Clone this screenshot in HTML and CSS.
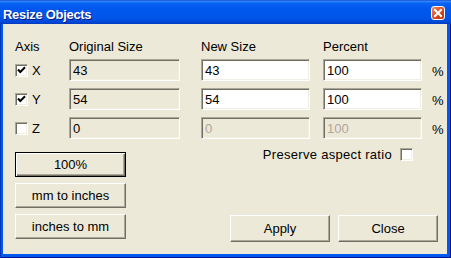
FILE: index.html
```html
<!DOCTYPE html>
<html lang="en">
<head>
  <meta charset="UTF-8" />
  <title>Resize Objects</title>
  <link rel="stylesheet" href="styles.css">
</head>
<body>

  <div class="window">
    <div class="titlebar">
      <span class="title">Resize Objects</span>
      <span class="close-btn">
        <svg width="12" height="12" viewBox="0 0 12 12"><path d="M3 3 L9 9 M9 3 L3 9" stroke="#fff" stroke-width="2" stroke-linecap="square" /></svg>
      </span>
    </div>

    <div class="client">
      <div class="axis-grid">
        <div class="head">Axis</div>
        <div class="head">Original Size</div>
        <div class="head">New Size</div>
        <div class="head">Percent</div>
        <div></div>

        <label class="axis"><span class="check"><svg width="9" height="9" viewBox="0 0 9 9"><path d="M1 3.5 L3.3 6 L8 1.3" stroke="#000" stroke-width="2" fill="none" /></svg></span>X</label>
        <div class="field readonly">43</div>
        <div class="field">43</div>
        <div class="field">100</div>
        <div class="unit">%</div>

        <label class="axis"><span class="check"><svg width="9" height="9" viewBox="0 0 9 9"><path d="M1 3.5 L3.3 6 L8 1.3" stroke="#000" stroke-width="2" fill="none" /></svg></span>Y</label>
        <div class="field readonly">54</div>
        <div class="field">54</div>
        <div class="field">100</div>
        <div class="unit">%</div>

        <label class="axis"><span class="check"></span>Z</label>
        <div class="field readonly">0</div>
        <div class="field disabled">0</div>
        <div class="field disabled">100</div>
        <div class="unit">%</div>
      </div>

      <div class="bottom">
        <div class="left-btns">
          <button class="btn default">100%</button>
          <button class="btn">mm to inches</button>
          <button class="btn">inches to mm</button>
        </div>
        <div class="right-col">
          <label class="preserve">Preserve aspect ratio <span class="check"></span></label>
          <div class="actions">
            <button class="btn wide">Apply</button>
            <button class="btn wide">Close</button>
          </div>
        </div>
      </div>
    </div>
  </div>

</body>
</html>
```

FILE: styles.css
```css
body {
  margin: 0;
  font-family: "Liberation Sans", Arial, sans-serif;
  font-size: 13px;
  line-height: 15px;
  color: #000;
  background: #0054e3;
}

.window {
  width: 451px;
  height: 258px;
  display: flex;
  flex-direction: column;
  background: #0058ee;
  box-shadow: inset 1px 0 #0036b8, inset -1px -1px #00138c;
}

.titlebar {
  height: 24px;
  flex: none;
  display: flex;
  justify-content: space-between;
  background: linear-gradient(to bottom, #0037b8 0, #3d8cff 1px, #0a64f4 3px, #0058ee 8px, #0055e8 18px, #0048d8 22px, #0038c0 24px);
}

.title {
  margin: 7px 0 0 3px;
  color: #fff;
  font-weight: bold;
  letter-spacing: -0.3px;
  text-shadow: 1px 1px #0a1883;
}

.close-btn {
  width: 14px;
  height: 14px;
  margin: 6px 6px 0 0;
  box-sizing: border-box;
  border: 1px solid #fff;
  border-radius: 3px;
  background: linear-gradient(135deg, #f08a66, #d9481f 55%, #b8300e);
  display: flex;
  align-items: center;
  justify-content: center;
}

.client {
  flex: 1;
  margin: 0 4px 4px 3px;
  padding: 15px 9px 12px 12px;
  background: #ece9d8;
}

.axis-grid {
  display: grid;
  grid-template-columns: 54px 132px 122px 109px auto;
  grid-template-rows: 20px 29px 29px 22px;
}

.head {
  align-self: start;
}

.axis {
  height: 22px;
  display: flex;
  align-items: center;
  gap: 4px;
  align-self: start;
}

.check {
  width: 13px;
  height: 13px;
  box-sizing: border-box;
  border-top: 1px solid #aca899;
  border-left: 1px solid #aca899;
  border-right: 1px solid #fff;
  border-bottom: 1px solid #fff;
  box-shadow: inset 1px 1px #716f64, inset -1px -1px #f1efe2;
  background: #fff;
  display: flex;
  align-items: center;
  justify-content: center;
  flex: none;
}

.field {
  height: 22px;
  box-sizing: border-box;
  padding: 3px 3px 0;
  border-top: 1px solid #aca899;
  border-left: 1px solid #aca899;
  border-right: 1px solid #fff;
  border-bottom: 1px solid #fff;
  box-shadow: inset 1px 1px #716f64, inset -1px -1px #f1efe2;
  background: #fff;
  align-self: start;
}

.field.readonly {
  width: 111px;
  background: #ece9d8;
}

.axis-grid .field:nth-child(5n+3) {
  width: 109px;
}

.axis-grid .field:nth-child(5n+4) {
  width: 99px;
}

.field.disabled {
  background: #ece9d8;
  color: #aca899;
}

.unit {
  align-self: start;
  padding-top: 5px;
}

.bottom {
  margin-top: 9px;
  display: flex;
  justify-content: space-between;
}

.left-btns {
  padding-top: 4px;
  display: flex;
  flex-direction: column;
  gap: 6px;
}

.btn {
  width: 111px;
  height: 25px;
  padding: 0;
  font: inherit;
  color: #000;
  background: #ece9d8;
  border-top: 1px solid #fff;
  border-left: 1px solid #fff;
  border-right: 1px solid #716f64;
  border-bottom: 1px solid #716f64;
  box-shadow: inset -1px -1px #aca899;
}

.btn.default {
  border: 1px solid #000;
  box-shadow: inset 1px 1px #fff, inset -1px -1px #716f64, inset -2px -2px #aca899;
}

.btn.wide {
  width: 100px;
  height: 27px;
}

.right-col {
  display: flex;
  flex-direction: column;
  align-items: flex-end;
}

.preserve {
  height: 13px;
  margin-right: 25px;
  display: flex;
  align-items: center;
  gap: 8px;
  letter-spacing: 0.3px;
}

.actions {
  margin-top: 54px;
  display: flex;
  gap: 8px;
}
```
